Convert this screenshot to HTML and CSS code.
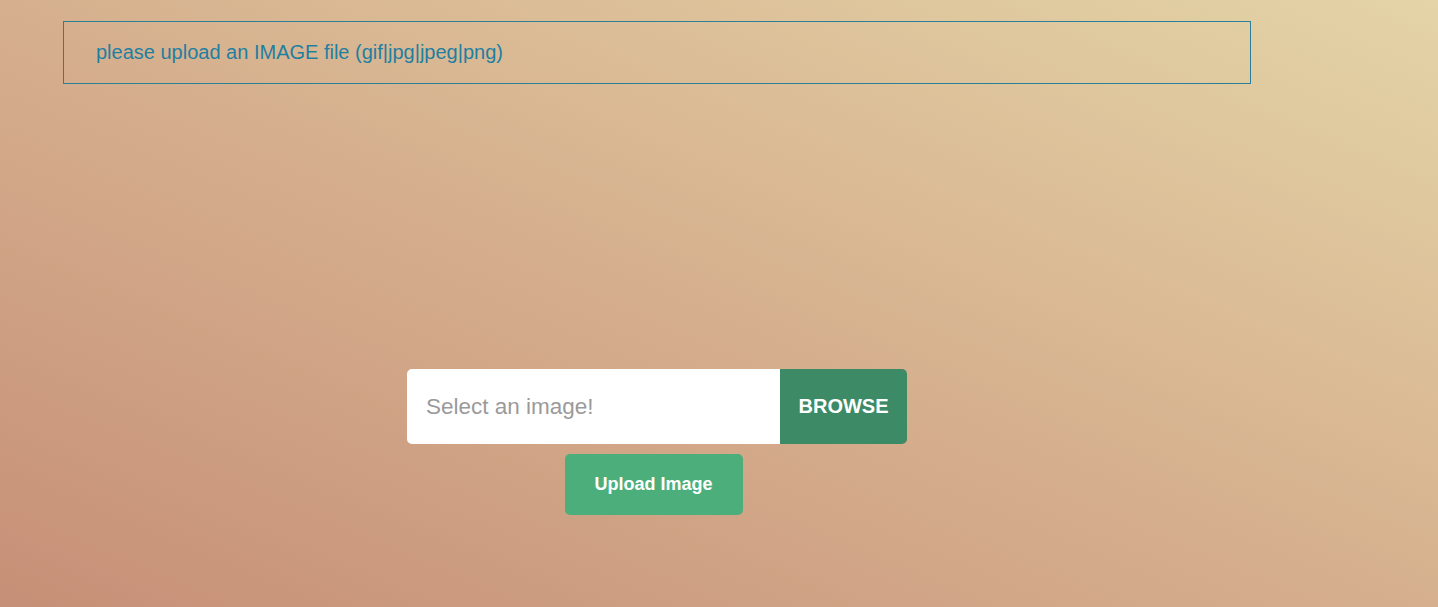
FILE: index.html
```html
<!DOCTYPE html>
<html lang="en">
<head>
<meta charset="utf-8">
<title>Upload Image</title>
<link rel="stylesheet" href="styles.css">
</head>
<body>
<div class="page">
  <div class="container">
    <div class="notice">please upload an IMAGE file (gif|jpg|jpeg|png)</div>
    <form class="upload-form">
      <div class="input-group">
        <input class="file-name" type="text" placeholder="Select an image!">
        <button class="browse" type="button">BROWSE</button>
      </div>
      <button class="upload" type="button">Upload Image</button>
    </form>
  </div>
</div>
</body>
</html>
```
FILE: styles.css
```css
html, body {
  margin: 0;
  padding: 0;
  height: 100%;
}
body {
  font-family: "Liberation Sans", Arial, sans-serif;
  background: linear-gradient(to top right, #c68f77 0%, #d6b08e 50%, #e4d4a7 100%);
  min-height: 607px;
}
.page {
  padding: 21px 0 0 63px;
}
.container {
  width: 1188px;
}
.notice {
  box-sizing: border-box;
  height: 63px;
  border: 1px solid #2b7f99;
  padding: 0 32px;
  display: flex;
  align-items: center;
  font-size: 20px;
  color: #1f7fa1;
}
.upload-form {
  margin-top: 285px;
  display: flex;
  flex-direction: column;
  align-items: center;
}
.input-group {
  display: flex;
  width: 500px;
  height: 75px;
}
.file-name {
  flex: 1;
  min-width: 0;
  border: none;
  outline: none;
  background: #fff;
  border-radius: 5px 0 0 5px;
  padding: 0 0 0 19px;
  font-family: "Liberation Sans", Arial, sans-serif;
  font-size: 22.5px;
  color: #333;
}
.file-name::placeholder {
  color: #9a9a9a;
}
.browse {
  width: 127px;
  border: none;
  background: #3d8b66;
  color: #fff;
  font-family: "Liberation Sans", Arial, sans-serif;
  font-weight: bold;
  font-size: 20px;
  border-radius: 0 5px 5px 0;
  padding: 0;
}
.upload {
  margin-top: 10px;
  margin-right: 7px;
  width: 178px;
  height: 61px;
  border: none;
  border-radius: 5px;
  background: #4caf7b;
  color: #fff;
  font-family: "Liberation Sans", Arial, sans-serif;
  font-weight: bold;
  font-size: 18px;
  padding: 0;
}
```
